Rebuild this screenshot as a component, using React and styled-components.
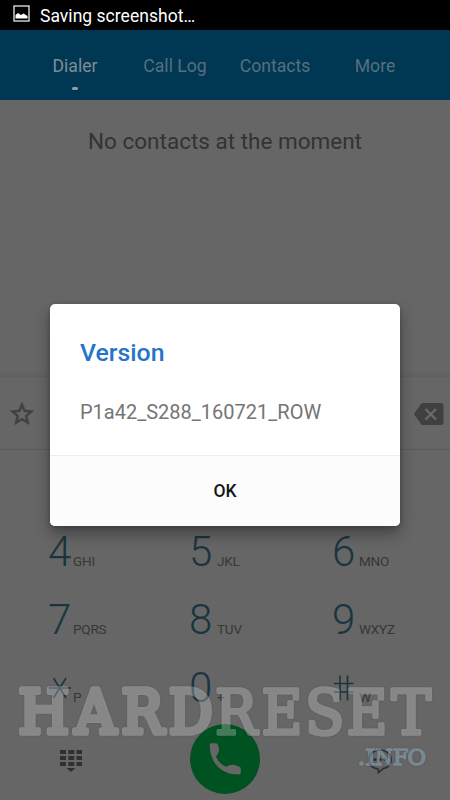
import React from "react";
import styled, { createGlobalStyle } from "styled-components";

const GlobalStyle = createGlobalStyle`
  * { box-sizing: border-box; }
  body { margin: 0; background: #666; font-family: Roboto, "Liberation Sans", sans-serif; }
`;

const Screen = styled.div`
  position: relative;
  width: 450px;
  height: 800px;
  overflow: hidden;
  display: flex;
  flex-direction: column;
  background: #666;
`;

const StatusBar = styled.div`
  height: 30px;
  flex: none;
  display: flex;
  align-items: center;
  padding: 2px 0 0 13px;
  gap: 10px;
  background: #000;
  color: #fff;
  font-size: 17.5px;
  line-height: 28px;
  letter-spacing: 0.03px;
  svg { margin-top: -5px; }
`;

const Tabs = styled.nav`
  height: 70px;
  flex: none;
  display: grid;
  grid-template-columns: repeat(4, 100px);
  padding: 0 25px;
  background: #003753;
`;

const Tab = styled.div`
  display: flex;
  flex-direction: column;
  align-items: center;
  padding-top: 24px;
  font-size: 17.6px;
  line-height: 24px;
  color: ${(p) => (p.$active ? "#808c93" : "#56707e")};
`;

const Dot = styled.span`
  width: 6px;
  height: 3px;
  margin-top: 9px;
  border-radius: 2px;
  background: #929da3;
`;

const Contacts = styled.div`
  height: 278px;
  flex: none;
  padding-top: 26px;
  text-align: center;
  font-size: 22.5px;
  line-height: 30px;
  color: #333;
  background: linear-gradient(#666 0 271px, #5f5f5f 278px);
`;

const NumberBar = styled.div`
  height: 72px;
  flex: none;
  display: flex;
  align-items: center;
  justify-content: space-between;
  padding: 0 6px 0 8px;
  border-top: 1px solid #6b6b6b;
  border-bottom: 1px solid #5b5b5b;
`;

const Keypad = styled.div`
  flex: none;
  display: grid;
  grid-template-columns: 141px 143px 1fr;
  grid-auto-rows: 68px;
  padding-left: 48px;
`;

const Key = styled.div`
  display: flex;
  align-items: flex-start;
  line-height: 68px;
`;

const Digit = styled.span`
  width: ${(p) => p.$width}px;
  flex: none;
  font-size: 42px;
  font-weight: 300;
  color: #1b353f;
`;

const Letters = styled.span`
  margin-top: 9px;
  font-size: 13.5px;
  letter-spacing: -0.2px;
  color: #363636;
`;

const Symbol = styled.div`
  width: ${(p) => p.$width}px;
  padding-top: ${(p) => p.$top}px;
  line-height: 0;
`;

const Actions = styled.div`
  flex: 1;
  display: grid;
  grid-template-columns: 142px 166px 142px;
  justify-items: center;
  align-items: center;
`;

const CallButton = styled.div`
  width: 70px;
  height: 70px;
  margin-top: -4px;
  border-radius: 50%;
  background: #005220;
`;

const Watermark = styled.svg`
  position: absolute;
  left: 0;
  top: 670px;
  pointer-events: none;
  filter: drop-shadow(0 0 1px rgba(0, 0, 0, 0.4));
`;

const Overlay = styled.div`
  position: absolute;
  inset: 0;
  z-index: 3;
  display: flex;
  align-items: flex-start;
  justify-content: center;
  padding-top: 304px;
`;

const Dialog = styled.section`
  width: 350px;
  height: 221.5px;
  display: flex;
  flex-direction: column;
  border-radius: 5px;
  overflow: hidden;
  background: #fff;
  box-shadow: 0 8px 15px rgba(0, 0, 0, 0.34), 0 1px 4px rgba(0, 0, 0, 0.2);
`;

const DialogBody = styled.div`
  flex: 1;
  padding: 32px 30px 0;
`;

const Title = styled.h1`
  margin: 0;
  font-size: 24.8px;
  line-height: 33px;
  font-weight: 500;
  color: #2474ca;
`;

const Message = styled.p`
  margin: 28px 0 0;
  font-size: 20px;
  line-height: 30px;
  color: #757575;
`;

const OkButton = styled.button`
  height: 70.5px;
  border: 0;
  border-top: 1px solid #ececec;
  background: #fcfcfc;
  font: 500 17.5px Roboto, "Liberation Sans", sans-serif;
  color: #161616;
`;

const StarSymbol = () => (
  <svg width="24" height="24" viewBox="0 0 24 24" fill="none" stroke="#1b353f" strokeWidth="1.6">
    <path d="M5.5 1 18 21M18 1 5.500 21M1 11h22" />
  </svg>
);

const HashSymbol = () => (
  <svg width="22" height="28" viewBox="0 0 22 28" fill="none" stroke="#1b353f" strokeWidth="1.6">
    <path d="M8 1.500v25M15.500 1.500v25M2 9.500H21.500M2 18H21.500" />
  </svg>
);

const keys = [
  ["1", "", 25], ["2", "ABC", 28], ["3", "DEF", 27],
  ["4", "GHI", 25], ["5", "JKL", 28], ["6", "MNO", 27],
  ["7", "PQRS", 25], ["8", "TUV", 28], ["9", "WXYZ", 27],
  ["*", "P", 25], ["0", "+", 28], ["#", "W", 27],
];

const KeyLabel = ({ value, width }) => {
  if (value === "*") return <Symbol $width={width} $top={23}><StarSymbol /></Symbol>;
  if (value === "#") return <Symbol $width={width} $top={20}><HashSymbol /></Symbol>;
  return <Digit $width={width}>{value}</Digit>;
};

const heavyLetters = [
  ["H", 18.5, 50.5], ["A", 75, 41], ["R", 121.5, 42], ["D", 169, 43.5],
];
const lightLetters = [
  ["R", 215, 42], ["E", 261.5, 41], ["S", 305, 39.5], ["E", 346.5, 41], ["T", 391.5, 39.5],
];
const domainLetters = [
  [".", 357.5, 8], ["I", 365, 11], ["N", 375, 18], ["F", 393, 15.5], ["O", 407.5, 18.5],
];

const StretchedLetters = ({ letters, y }) =>
  letters.map(([letter, x, width]) => (
    <text key={x} x={x} y={y} textLength={width} lengthAdjust="spacingAndGlyphs">
      {letter}
    </text>
  ));

export default function App() {
  return (
    <>
      <GlobalStyle />
      <Screen>
        <StatusBar>
          <svg width="17" height="17" viewBox="0 0 17 17">
            <rect x="1" y="1" width="15" height="15" fill="none" stroke="#d8d8d8" strokeWidth="1.4" />
            <path d="M2.5 13.5V10L5 8l3 2 2.5-1.5L14.5 11v2.5z" fill="#fff" />
          </svg>
          Saving screenshot…
        </StatusBar>
        <Tabs>
          <Tab $active>Dialer<Dot /></Tab>
          <Tab>Call Log</Tab>
          <Tab>Contacts</Tab>
          <Tab>More</Tab>
        </Tabs>
        <Contacts>No contacts at the moment</Contacts>
        <NumberBar>
          <svg width="28" height="28" viewBox="0 0 24 24" fill="#404040" stroke="#404040" strokeWidth="0.5">
            <path d="M22 9.24l-7.19-.62L12 2 9.19 8.63 2 9.24l5.46 4.73L5.82 21 12 17.27 18.18 21l-1.63-7.03L22 9.24zM12 15.4l-3.76 2.27 1-4.28-3.32-2.88 4.38-.38L12 6.1l1.71 4.04 4.38.38-3.32 2.88 1 4.28L12 15.4z" />
          </svg>
          <svg width="30" height="23" viewBox="0 0 30 23">
            <path d="M8.500 0H27q2.500 0 2.500 2.500v17q0 2.500-2.500 2.500H8.500Q7.500 22 6.500 20.500L0 11 6.500 1.500Q7.500 0 8.500 0z" fill="#404040" />
            <path d="M11.500 6 22 16.500M22 6 11.500 16.500" stroke="#696969" strokeWidth="2.400" />
          </svg>
        </NumberBar>
        <Keypad>
          {keys.map(([value, letters, width]) => (
            <Key key={value}>
              <KeyLabel value={value} width={width} />
              <Letters>{letters}</Letters>
            </Key>
          ))}
        </Keypad>
        <Actions>
          <svg width="24" height="24" viewBox="0 0 24 24" fill="#303030">
            <path d="M1 1h6v4H1zM9.300 1h6v4h-6zM17.500 1h5.500v4h-5.500zM1 7h6v4H1zM9.300 7h6v4h-6zM17.500 7h5.500v4h-5.500zM1 13h6v4H1zM9.300 13h6v4h-6zM17.500 13h5.500v4h-5.500zM7.500 19h9L12 23z" />
          </svg>
          <CallButton>
            <svg width="70" height="70" viewBox="0 0 70 70" fill="#666">
              <path d="M21 19.300h5q1.500 0 2 1.800 1.300 3.500 1 5.900Q28 30 26 32.500 28.500 39.500 36 42.700 39.500 40.500 43.500 40.800 47 41.500 50 43q.8.500.8 1.700v4q0 1.800-1.800 1.800C39 50.500 31 47.500 25.500 40 21.500 34.500 19.700 28 19.700 21q0-1.700 1.300-1.700z" />
            </svg>
          </CallButton>
          <svg width="26" height="27" viewBox="0 0 26 27">
            <path d="M13.500 2C7 2 3 6.200 3 11.500S6.800 20.700 12 21l.5 3.500L17 20.700c5-1 8-4.700 8-9.200C25 6 20 2 13.500 2z" fill="none" stroke="#303030" strokeWidth="1.700" />
            <g fill="#303030"><circle cx="9" cy="11.500" r="1.600" /><circle cx="14" cy="11.500" r="1.600" /><circle cx="19" cy="11.500" r="1.600" /></g>
          </svg>
        </Actions>
        <Watermark width="450" height="130" viewBox="0 0 450 130" fontFamily="DejaVu Serif, serif" strokeLinejoin="round">
          <g fill="#fff" stroke="#fff" opacity="0.27">
            <g fontSize="59" strokeWidth="5.5"><StretchedLetters letters={heavyLetters} y={63.3} /></g>
            <g fontSize="62" strokeWidth="3.4"><StretchedLetters letters={lightLetters} y={64.3} /></g>
          </g>
          <g fill="#a5cbe2" stroke="#a5cbe2" opacity="0.42" fontSize="22.5" strokeWidth="1.5">
            <StretchedLetters letters={domainLetters} y={94.5} />
          </g>
        </Watermark>
        <Overlay>
          <Dialog role="dialog">
            <DialogBody>
              <Title>Version</Title>
              <Message>P1a42_S288_160721_ROW</Message>
            </DialogBody>
            <OkButton>OK</OkButton>
          </Dialog>
        </Overlay>
      </Screen>
    </>
  );
}
